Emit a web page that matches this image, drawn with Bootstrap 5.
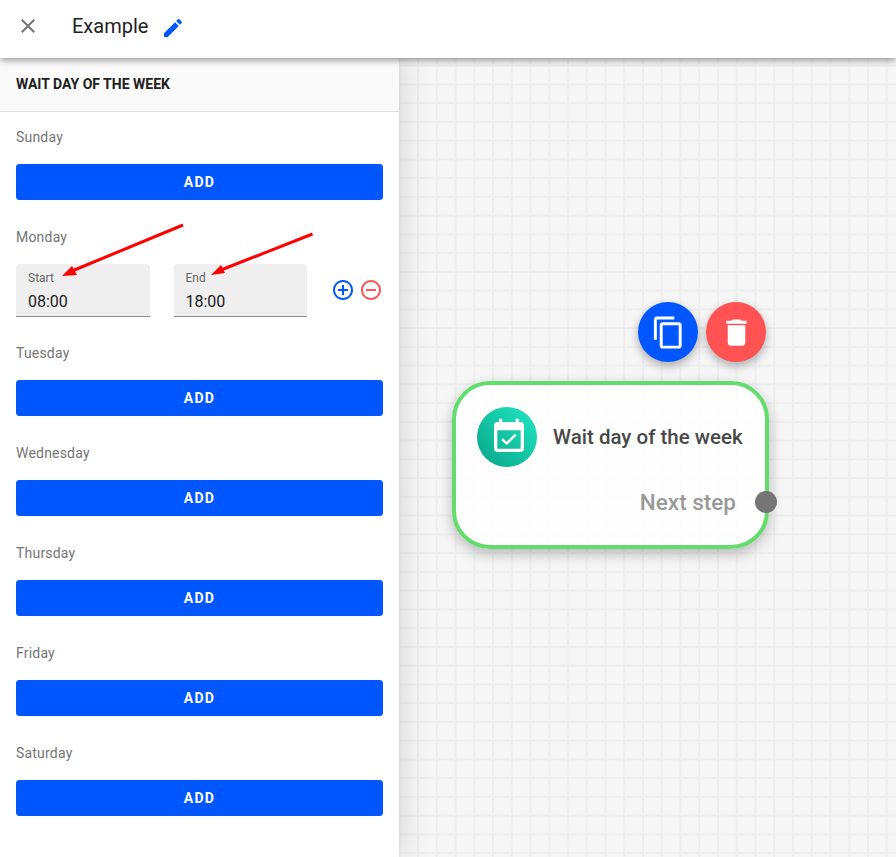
<!DOCTYPE html>
<html lang="en">
<head>
<meta charset="utf-8">
<title>Example</title>
<link href="https://cdn.jsdelivr.net/npm/bootstrap@5.3.0/dist/css/bootstrap.min.css" rel="stylesheet">
<style>
html,body{height:100%;}
body{font-family:Roboto,"Liberation Sans",sans-serif;color:#212121;background:#fff;overflow:hidden;}
.top-strip{height:58px;background:#fff;box-shadow:0 2px 7px rgba(0,0,0,.42);z-index:3;position:relative;padding-left:16px;padding-bottom:6px;}
.strip-title{font-size:20px;line-height:24px;margin-left:32px;margin-right:13px;color:#212121;}
.pen-ico{margin-top:3px;}
.ico{display:block;flex:none;fill:currentColor;}
.tone-grey{color:#757575;}
.tone-blue{color:#0057ff;}
.tone-red{color:#ff5252;}
.work-area{height:799px;}
.side-panel{width:399px;flex:none;background:#fff;box-shadow:0 0 30px rgba(0,0,0,.17);z-index:2;position:relative;}
.panel-head{height:54px;background:#fafafa;border-bottom:1px solid #e0e0e0;padding:0 16px;font-size:14px;font-weight:700;color:#212121;}
.day-list{padding:15px 16px 0;}
.day-block{margin-bottom:27px;}
.day-block.day-open{margin-bottom:26px;}
.day-name{font-size:14px;line-height:20px;letter-spacing:.2px;color:#757575;margin-bottom:17px;}
.add-btn{--bs-btn-bg:#0057ff;--bs-btn-border-color:#0057ff;--bs-btn-hover-bg:#0057ff;--bs-btn-hover-border-color:#0057ff;height:36px;padding:0;border-radius:3px;font-size:14px;font-weight:700;letter-spacing:1.25px;line-height:34px;}
.time-box{flex:1 1 0;min-width:0;height:53px;background:#efefef;border-radius:4px 4px 0 0;border-bottom:1px solid #8c8c8c;padding:6px 12px 0;}
.time-label{font-size:12px;line-height:16px;color:#666;margin:0;display:block;}
.time-value{font-size:16px;line-height:20px;margin-top:6px;color:#212121;background:transparent;border:0;padding:0;border-radius:0;box-shadow:none;}
.time-value:focus{background:transparent;box-shadow:none;}
.icon-pair{margin-left:24px;margin-bottom:1px;gap:4px;}
.plain-icon{background:none;border:0;padding:0;line-height:0;}
.flow-canvas{background-color:#f6f6f6;background-image:linear-gradient(to right,#eeeeee 2px,transparent 2px),linear-gradient(to bottom,#eeeeee 2px,transparent 2px);background-size:18.75px 18.75px;background-position:18px 6.6px;overflow:hidden;}
.fab{position:absolute;top:244px;width:60px;height:60px;border:0;padding:0;border-radius:50%;color:#fff;box-shadow:0 4px 10px rgba(0,0,0,.3);}
.fab-copy{left:239px;background:#0057ff;}
.fab-trash{left:307px;background:#ff5252;}
.flow-node{position:absolute;left:53px;top:323px;width:317px;height:168px;background:rgba(255,255,255,.85);border:4px solid #62dc6b;border-radius:38px;box-shadow:0 5px 14px rgba(0,0,0,.25);padding:22px 21px 0;}
.node-disc{width:60px;height:60px;border-radius:50%;background:linear-gradient(to top right,#06a386,#22e8c2);color:#fff;}
.cal-ico{margin-left:3px;}
.node-title{font-size:20.5px;font-weight:500;line-height:24px;color:#484848;margin-left:16px;white-space:nowrap;}
.node-next{font-size:22.5px;font-weight:500;line-height:28px;color:#999;margin-top:21px;padding-right:8px;text-align:right;}
.node-port{position:absolute;left:299px;top:106px;width:22px;height:22px;border-radius:50%;background:#757575;}
.arrow-layer{position:absolute;left:0;top:0;z-index:5;pointer-events:none;}
</style>
</head>
<body>
<header class="top-strip d-flex align-items-center">
  <svg class="ico tone-grey" width="24" height="24" viewBox="0 0 24 24"><path d="M19 6.41L17.59 5 12 10.59 6.41 5 5 6.41 10.59 12 5 17.59 6.41 19 12 13.41 17.59 19 19 17.59 13.41 12z"/></svg>
  <span class="strip-title">Example</span>
  <svg class="ico tone-blue pen-ico" width="24" height="24" viewBox="0 0 24 24"><path d="M3 17.25V21h3.75L17.81 9.94l-3.75-3.75L3 17.25zM20.71 7.04c.39-.39.39-1.02 0-1.41l-2.34-2.34c-.39-.39-1.02-.39-1.41 0l-1.83 1.83 3.75 3.75 1.83-1.83z"/></svg>
</header>
<main class="work-area d-flex">
  <aside class="side-panel">
    <div class="panel-head d-flex align-items-center">WAIT DAY OF THE WEEK</div>
    <div class="day-list">
      <section class="day-block"><div class="day-name">Sunday</div><button type="button" class="btn btn-primary add-btn w-100">ADD</button></section>
      <section class="day-block day-open">
        <div class="day-name">Monday</div>
        <div class="d-flex align-items-center">
          <div class="d-flex flex-grow-1 gap-4">
            <div class="time-box"><label class="time-label" for="mon-start">Start</label><input id="mon-start" class="form-control time-value" value="08:00"></div>
            <div class="time-box"><label class="time-label" for="mon-end">End</label><input id="mon-end" class="form-control time-value" value="18:00"></div>
          </div>
          <div class="icon-pair d-flex">
            <button type="button" class="plain-icon tone-blue" aria-label="Add"><svg class="ico" width="24" height="24" viewBox="0 0 24 24"><path d="M13 7h-2v4H7v2h4v4h2v-4h4v-2h-4V7zm-1-5C6.48 2 2 6.48 2 12s4.48 10 10 10 10-4.48 10-10S17.52 2 12 2zm0 18c-4.41 0-8-3.59-8-8s3.59-8 8-8 8 3.59 8 8-3.59 8-8 8z"/></svg></button>
            <button type="button" class="plain-icon tone-red" aria-label="Remove"><svg class="ico" width="24" height="24" viewBox="0 0 24 24"><path d="M7 11v2h10v-2H7zm5-9C6.48 2 2 6.48 2 12s4.48 10 10 10 10-4.48 10-10S17.52 2 12 2zm0 18c-4.41 0-8-3.59-8-8s3.59-8 8-8 8 3.59 8 8-3.59 8-8 8z"/></svg></button>
          </div>
        </div>
      </section>
      <section class="day-block"><div class="day-name">Tuesday</div><button type="button" class="btn btn-primary add-btn w-100">ADD</button></section>
      <section class="day-block"><div class="day-name">Wednesday</div><button type="button" class="btn btn-primary add-btn w-100">ADD</button></section>
      <section class="day-block"><div class="day-name">Thursday</div><button type="button" class="btn btn-primary add-btn w-100">ADD</button></section>
      <section class="day-block"><div class="day-name">Friday</div><button type="button" class="btn btn-primary add-btn w-100">ADD</button></section>
      <section class="day-block"><div class="day-name">Saturday</div><button type="button" class="btn btn-primary add-btn w-100">ADD</button></section>
    </div>
  </aside>
  <div class="flow-canvas flex-grow-1 position-relative">
    <button type="button" class="fab fab-copy d-flex align-items-center justify-content-center" aria-label="Copy"><svg class="ico" width="35" height="35" viewBox="0 0 24 24"><path d="M16 1H4c-1.1 0-2 .9-2 2v14h2V3h12V1zm3 4H8c-1.1 0-2 .9-2 2v14c0 1.1.9 2 2 2h11c1.1 0 2-.9 2-2V7c0-1.1-.9-2-2-2zm0 16H8V7h11v14z"/></svg></button>
    <button type="button" class="fab fab-trash d-flex align-items-center justify-content-center" aria-label="Delete"><svg class="ico" width="35" height="35" viewBox="0 0 24 24"><path d="M6 19c0 1.1.9 2 2 2h8c1.1 0 2-.9 2-2V7H6v12zM19 4h-3.5l-1-1h-5l-1 1H5v2h14V4z"/></svg></button>
    <div class="flow-node">
      <div class="d-flex align-items-center">
        <div class="node-disc d-flex align-items-center justify-content-center"><svg class="ico cal-ico" width="40" height="40" viewBox="0 0 24 24"><path d="M16.53 11.06L15.47 10l-4.88 4.88-2.12-2.12-1.06 1.06L10.59 17l5.94-5.94zM19 3h-1V1h-2v2H8V1H6v2H5c-1.11 0-1.99.9-1.99 2L3 19c0 1.1.89 2 2 2h14c1.1 0 2-.9 2-2V5c0-1.1-.9-2-2-2zm0 16H5V8h14v11z"/></svg></div>
        <div class="node-title">Wait day of the week</div>
      </div>
      <div class="node-next">Next step</div>
      <span class="node-port"></span>
    </div>
  </div>
</main>
<svg class="arrow-layer" width="896" height="857" viewBox="0 0 896 857" aria-hidden="true">
  <line x1="183" y1="225" x2="72" y2="271" stroke="#f00" stroke-width="3"/>
  <polygon points="62,276 72,266 77,275" fill="#f00"/>
  <line x1="312.500" y1="234" x2="221" y2="270" stroke="#f00" stroke-width="3"/>
  <polygon points="211,275 221,265 225,273" fill="#f00"/>
</svg>
</body>
</html>
